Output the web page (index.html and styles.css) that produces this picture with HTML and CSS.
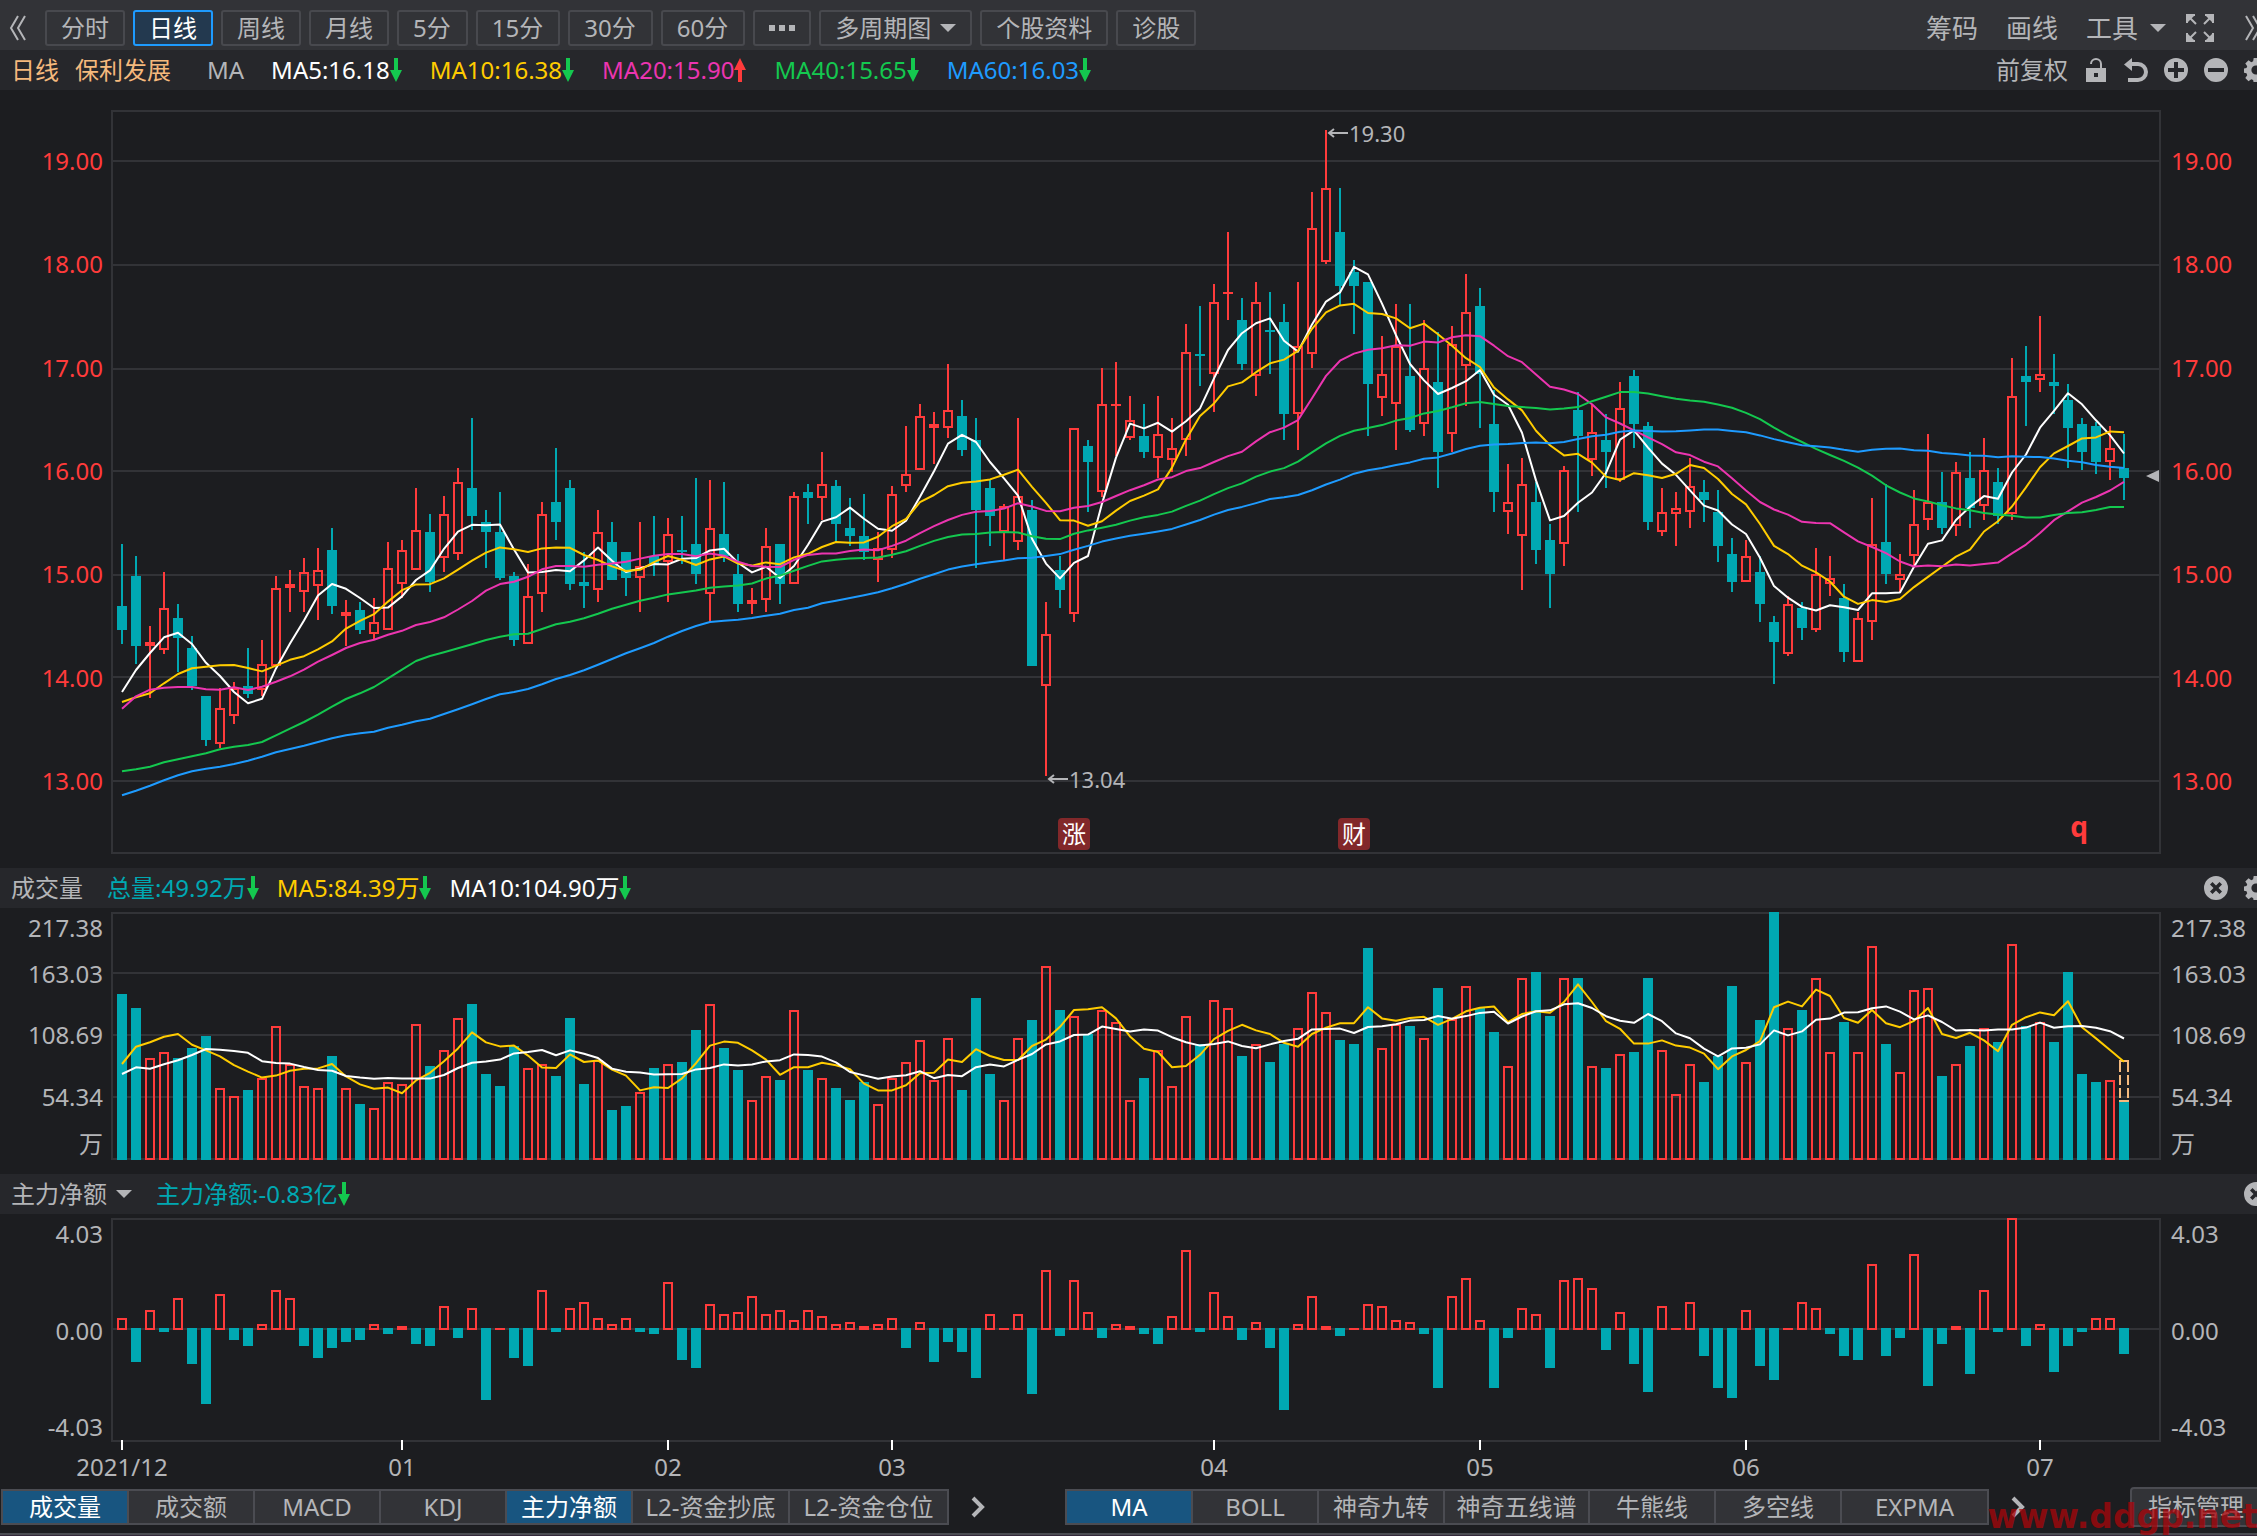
FILE: index.html
```html
<!DOCTYPE html>
<html lang="zh-CN">
<head>
<meta charset="utf-8">
<title>保利发展 日线</title>
<link rel="stylesheet" href="styles.css">
</head>
<body>
<svg class="defs" aria-hidden="true">
  <symbol id="arrow-down" viewBox="0 0 12 24"><path d="M4 0h4v12h4L6 24 0 12h4z"/></symbol>
  <symbol id="arrow-up" viewBox="0 0 12 24"><path d="M4 24h4V12h4L6 0 0 12h4z"/></symbol>
  <symbol id="caret" viewBox="0 0 16 8"><path d="M0 0h16L8 8z"/></symbol>
  <symbol id="gear" viewBox="0 0 26 26"><path fill-rule="evenodd" d="M10.500 0h5l.6 3.600 2 .9 3-2.100 3.500 3.500-2.100 3 .8 2 2.700.4v4.700l-2.700.6-.8 2 2.100 3-3.500 3.500-3-2.100-2 .8-.6 3.200h-5l-.6-3.200-2-.8-3 2.100-3.500-3.500 2.100-3-.8-2L0 16v-4.700l2.700-.4.8-2-2.100-3 3.500-3.500 3 2.100 2-.9zM13 8a5 5 0 1 0 0 10 5 5 0 0 0 0-10z"/></symbol>
  <symbol id="close" viewBox="0 0 24 24"><path fill-rule="evenodd" d="M12 0a12 12 0 1 0 0 24 12 12 0 0 0 0-24zM8.500 6 12 9.500 15.500 6 18 8.500 14.500 12l3.500 3.500-2.500 2.500-3.500-3.500L8.500 18 6 15.500 9.500 12 6 8.500z"/></symbol>
  <symbol id="next" viewBox="0 0 14 22"><path d="M2 2l9 9-9 9" fill="none" stroke="currentColor" stroke-width="4"/></symbol>
</svg>

<header class="toolbar">
  <button class="icon-btn back" aria-label="收起"><svg width="18" height="28" viewBox="0 0 18 28"><path d="M9 2 2 14l7 12M16 2 9 14l7 12" fill="none" stroke="currentColor" stroke-width="2"/></svg></button>
  <nav class="periods">
    <button>分时</button>
    <button class="on">日线</button>
    <button>周线</button>
    <button>月线</button>
    <button class="num">5分</button>
    <button class="num">15分</button>
    <button class="num">30分</button>
    <button class="num">60分</button>
    <button class="more" aria-label="更多"><svg width="26" height="6" viewBox="0 0 26 6"><path d="M0 0h6v6H0zM10 0h6v6h-6zM20 0h6v6h-6z"/></svg></button>
    <button>多周期图<svg class="caret"><use href="#caret"/></svg></button>
    <button>个股资料</button>
    <button>诊股</button>
  </nav>
  <div class="tools">
    <button>筹码</button>
    <button>画线</button>
    <button class="menu">工具<svg class="caret"><use href="#caret"/></svg></button>
    <button class="full" aria-label="全屏"><svg width="28" height="28" viewBox="0 0 28 28" fill="none" stroke="currentColor" stroke-width="2"><path d="M1 9V1h8M19 1h8v8M27 19v8h-8M9 27H1v-8M2 2l8 8M26 2l-8 8M26 26l-8-8M2 26l8-8"/></svg></button>
    <button aria-label="展开"><svg width="24" height="28" viewBox="0 0 24 28"><path d="M4 2l7 12-7 12M11 2l7 12-7 12" fill="none" stroke="currentColor" stroke-width="2"/></svg></button>
  </div>
</header>

<section class="info price-info">
  <span class="stock">日线</span><span class="stock name">保利发展</span><span class="label">MA</span>
  <span class="val white">MA5:16.18<svg class="dn"><use href="#arrow-down"/></svg></span>
  <span class="val yellow">MA10:16.38<svg class="dn"><use href="#arrow-down"/></svg></span>
  <span class="val pink">MA20:15.90<svg class="up"><use href="#arrow-up"/></svg></span>
  <span class="val green">MA40:15.65<svg class="dn"><use href="#arrow-down"/></svg></span>
  <span class="val blue">MA60:16.03<svg class="dn"><use href="#arrow-down"/></svg></span>
  <div class="actions">
    <button>前复权</button>
    <button aria-label="锁定"><svg class="ic" viewBox="0 0 24 24"><path fill-rule="evenodd" d="M2 10h20v14H2zM10 15v4h4v-4z"/><path d="M7 6a5 5 0 0 1 10 0v5" fill="none" stroke="currentColor" stroke-width="2"/></svg></button>
    <button aria-label="撤销"><svg class="ic" viewBox="0 0 24 24"><path d="M0 6.500 8 0v13z"/><path d="M6 6h8a8 8 0 0 1 0 16H4" fill="none" stroke="currentColor" stroke-width="4"/></svg></button>
    <button aria-label="放大"><svg class="ic" viewBox="0 0 24 24"><path fill-rule="evenodd" d="M12 0a12 12 0 1 0 0 24 12 12 0 0 0 0-24zM10 4h4v6h6v4h-6v6h-4v-6H4v-4h6z"/></svg></button>
    <button aria-label="缩小"><svg class="ic" viewBox="0 0 24 24"><path fill-rule="evenodd" d="M12 0a12 12 0 1 0 0 24 12 12 0 0 0 0-24zM4 10h16v4H4z"/></svg></button>
    <button aria-label="设置"><svg class="ic"><use href="#gear"/></svg></button>
  </div>
</section>

<main>
  <section class="panel price">
    <div class="axis left"><span>19.00</span><span>18.00</span><span>17.00</span><span>16.00</span><span>15.00</span><span>14.00</span><span>13.00</span></div>
    <svg class="plot" id="price"></svg>
    <div class="axis right"><span>19.00</span><span>18.00</span><span>17.00</span><span>16.00</span><span>15.00</span><span>14.00</span><span>13.00</span></div>
  </section>

  <section class="info volume-info">
    <span class="label">成交量</span>
    <span class="val teal">总量:49.92万<svg class="dn"><use href="#arrow-down"/></svg></span>
    <span class="val yellow">MA5:84.39万<svg class="dn"><use href="#arrow-down"/></svg></span>
    <span class="val white">MA10:104.90万<svg class="dn"><use href="#arrow-down"/></svg></span>
    <div class="actions">
      <button aria-label="关闭"><svg class="ic"><use href="#close"/></svg></button>
      <button aria-label="设置"><svg class="ic"><use href="#gear"/></svg></button>
    </div>
  </section>
  <section class="panel volume">
    <div class="axis left"><span>217.38</span><span>163.03</span><span>108.69</span><span>54.34</span><span>万</span></div>
    <svg class="plot" id="volume"></svg>
    <div class="axis right"><span>217.38</span><span>163.03</span><span>108.69</span><span>54.34</span><span>万</span></div>
  </section>

  <section class="info flow-info">
    <button class="label">主力净额<svg class="caret"><use href="#caret"/></svg></button>
    <span class="val teal">主力净额:-0.83亿<svg class="dn"><use href="#arrow-down"/></svg></span>
    <div class="actions">
      <button aria-label="关闭"><svg class="ic"><use href="#close"/></svg></button>
    </div>
  </section>
  <section class="panel flow">
    <div class="axis left"><span>4.03</span><span>0.00</span><span>-4.03</span></div>
    <svg class="plot" id="flow"></svg>
    <div class="axis right"><span>4.03</span><span>0.00</span><span>-4.03</span></div>
  </section>
</main>

<footer class="bottom">
  <nav class="tabs">
    <button class="on">成交量</button><button>成交额</button><button>MACD</button><button>KDJ</button><button class="on">主力净额</button><button class="wide">L2-资金抄底</button><button class="wide">L2-资金仓位</button>
  </nav>
  <button class="next" aria-label="更多指标"><svg width="14" height="22"><use href="#next"/></svg></button>
  <nav class="tabs main-tabs">
    <button class="on">MA</button><button>BOLL</button><button>神奇九转</button><button class="mid">神奇五线谱</button><button>牛熊线</button><button>多空线</button><button class="mid">EXPMA</button>
  </nav>
  <button class="next" aria-label="更多主图指标"><svg width="14" height="22"><use href="#next"/></svg></button>
  <button class="manage">指标管理</button>
  <span class="mark">www.ddgp.net</span>
</footer>
<div class="edge"></div>
<script src="chart.js"></script>
</body>
</html>
```
FILE: styles.css
```css
* { box-sizing: border-box; }

body {
  margin: 0;
  background: #1c1d20;
  color: #b4b5b8;
  font-family: "Noto Sans", "Noto Sans CJK SC", sans-serif;
  font-size: 24px;
  line-height: 32px;
  overflow: hidden;
}

button {
  margin: 0;
  padding: 0;
  border: 0;
  background: none;
  color: inherit;
  font: inherit;
  white-space: nowrap;
}

svg { display: block; fill: currentColor; flex: none; }
.defs { position: absolute; width: 0; height: 0; }
.caret { width: 16px; height: 8px; }
.ic { width: 24px; height: 24px; }

.toolbar {
  display: flex;
  align-items: center;
  height: 50px;
  padding: 6px 0 0 9px;
  background: #323337;
}
.toolbar .back { width: 36px; }
.periods { display: flex; gap: 8px; }
.periods button {
  display: flex;
  align-items: center;
  gap: 9px;
  height: 36px;
  padding: 0 14px;
  border: 2px solid #48494e;
  border-radius: 3px;
}
.periods .num { padding-right: 15px; }
.periods .on { background: #23394f; border-color: #1e9bff; color: #fff; }
.tools {
  display: flex;
  align-items: center;
  gap: 28px;
  margin: 0 -9px 0 auto;
  font-size: 26px;
}
.menu { display: flex; align-items: center; gap: 12px; }
.full { margin-left: -8px; }

.info {
  display: flex;
  align-items: center;
  height: 40px;
  padding-left: 11px;
  background: #26272b;
}
.stock { color: #f5b97d; margin-right: 16px; }
.stock.name { margin-right: 36px; }
.info .label { display: flex; align-items: center; gap: 9px; margin-right: 24px; }
.price-info .label { margin-right: 27px; }
.val { display: flex; align-items: center; margin-right: 28px; white-space: nowrap; }
.val svg { width: 12px; height: 24px; }
.volume-info .val { margin-right: 18px; }
.dn { color: #14c84f; }
.up { color: #ff3b3b; }
.white { color: #fff; }
.yellow { color: #ffcc00; }
.pink { color: #ec35b0; }
.green { color: #14c84f; }
.blue { color: #1e9bff; }
.teal { color: #00a8b2; }
.actions { display: flex; align-items: center; gap: 16px; margin: 0 -11px 0 auto; }

.panel { display: flex; align-items: flex-start; }
.plot { flex: 1; min-width: 0; overflow: visible; }
.axis { display: flex; flex-direction: column; justify-content: space-between; }
.axis.left { width: 111px; padding-right: 8px; text-align: right; }
.axis.right { width: 96px; padding-left: 10px; }

.price { padding: 20px 0 14px; }
.price .plot { height: 744px; }
.price .axis { height: 687px; padding-top: 35px; color: #ff3b3b; }
.volume { padding: 4px 0 14px; }
.volume .plot { height: 248px; }
.volume .axis {
  display: grid;
  grid-template: 32px 60px 62px 62px 32px / 1fr;
  align-items: center;
  height: 248px;
}
.flow { padding-top: 4px; }
.flow .plot { height: 269px; }
.flow .axis { height: 225px; }

.plot text { fill: #b4b5b8; }
.plot .note { font-size: 22px; }
.plot .badge { fill: #fff; font-size: 24px; text-anchor: middle; }
.plot .event { fill: #ff3b3b; font-size: 28px; font-weight: 700; text-anchor: middle; }
.plot .date { text-anchor: middle; }

.bottom {
  position: relative;
  display: flex;
  align-items: center;
  height: 40px;
  padding-left: 1px;
}
.tabs { display: flex; border: 2px solid #4b4c52; }
.tabs button {
  width: 126px;
  height: 32px;
  background: #323337;
  border-right: 2px solid #4b4c52;
}
.tabs button:last-child { border-right: 0; }
.tabs .wide { width: 157px; }
.tabs .mid { width: 145px; }
.tabs .on { background: #185580; color: #fff; }
.next { margin-left: 22px; }
.main-tabs { margin-left: 80px; }
.manage {
  height: 40px;
  margin: 0 -10px 0 auto;
  padding: 0 21px 0 16px;
  background: #323337;
  border: 2px solid #4b4c52;
  border-radius: 4px;
}
.mark {
  position: absolute;
  right: -1px;
  bottom: -10px;
  color: rgba(170, 5, 10, .75);
  font: bold 33px/40px "DejaVu Sans", sans-serif;
}
.edge { height: 9px; margin-top: 6px; border-top: 2px solid #4b4c52; background: #33283a; }
```
FILE: chart.js
```js
// Each series is a list of segments: [base, unit, samples]; a sample sits at base + value / unit
// below the top of its plot. T marks a falling day, R a rising one.
const CANDLES = [
  [270, 3, `T492,678,750,792 T528,588,798,852 R738,786,798,954 R576,684,810,822 T672,714,774,876 T768,804,918,930
  T948,948,1080,1098 R924,984,1092,1104 R906,924,1008,1032 T804,918,942,954 R780,852,930,948 R588,624,858,858
  R570,612,624,696 R534,576,636,696 R504,570,618,720 T444,510,678,702 R660,696,708,798 T666,690,750,762
  R654,726,762,780 R486,564,750,750 R480,510,612,654 R324,450,570,570 T402,456,606,636 R348,402,534,576
  R264,306,522,540 T114,324,408,450 T390,426,456,564 T336,456,594,600 T576,588,780,798 R552,648,792,792
  R366,402,642,696 T204,366,426,480 T300,324,612,630 T516,606,618,684 R390,456,630,666`],
  [230, 3, `T546,606,720,720 T636,636,714,768 R546,678,714,816 T528,648,672,708 R534,582,666,786 T528,630,636,672
  T414,612,702,732 R420,564,762,846 T426,582,648,666 T642,702,792,816 R744,780,792,822 R564,618,780,816
  T612,612,732,792 R456,468,732,732 T432,456,474,552 R336,432,474,540 T420,438,552,606 T474,564,588,618
  T462,588,636,660 R576,624,660,726 R438,462,630,654 R258,402,438,456 R192,228,390,390 R216,252,264,372
  R72,210,264,294 T180,228,330,348 T234,300,510,684 T420,444,528,618 R492,498,576,660 R234,468,606,630
  T480,510,978,978 R786,882,1038,1308 T648,690,750,804 R264,264,822,846`],
  [-10, 3, `T1020,1038,1086,1236 R804,912,1176,1190 R786,912,918,1068 R888,960,1014,1020 T912,1008,1056,1074
  R888,1002,1074,1134 R954,1044,1080,1116 R672,756,1020,1068 T618,762,768,858 R552,606,822,936 R396,576,582,660
  T594,660,792,810 R546,606,828,888 T576,690,696,822 T612,666,942,1020 R546,738,942,1050 R276,384,762,804
  R90,264,486,492 T264,396,558,616 T480,516,558,702 T546,546,852,1008 R708,822,894,948 R612,738,912,1050
  T612,828,990,996 R660,804,972,1008 T696,846,1056,1164 R678,732,1002,1056 R522,636,798,918 T564,618,822,984
  T870,972,1176,1236 R1092,1206,1236,1302 R1074,1152,1308,1470 T1146,1206,1350,1392 T1272,1320,1422,1524
  R1098,1110,1332,1398`],
  [130, 2.529, `T384,430,496,688 R416,486,556,598 T440,506,536,627 R359,425,608,611 T329,344,465,526 T460,470,713,733
  R627,688,738,749 R637,678,693,774 R551,622,688,728 T607,637,658,713 T632,688,774,814 T754,794,865,890
  R759,799,865,865 T799,840,921,966 T951,966,1017,1123 R900,921,1047,1052 T916,931,981,1012 R779,845,986,991
  R799,855,870,900 T870,905,1042,1067 R941,956,1067,1067 R652,769,966,1012 T617,764,845,870 R794,845,860,890
  R632,718,799,825 R491,663,708,733 T587,663,728,744 R561,587,723,749 T536,602,678,728 R501,582,673,708
  T577,612,698,718 R298,395,693,708 T268,344,359,470 R192,339,354,384 T288,359,369,440 T364,405,475,577
  T450,465,536,582 T460,470,561,592 R470,526,561,607 T491,577,602,658`]
];

// Averages for the first days, whose history lies before the visible range.
const HISTORY = {
  5: [936,870,819,772],
  10: [966,952,940,910,882,865,860,856,855],
  20: [986,949,929,923,921,921,928,929,922,930,920,905,889,869,845,825,804,789,779],
  40: [1174,1168,1160,1147,1138,1129,1120,1108,1100,1095,1086,1066,1046,1026,1004,980,957,940,921,895,869,843,828,817,
    805,793,780,770,763,761,747,733,725,715,701,686,674,662,653],
  60: [1246,1232,1217,1201,1186,1174,1166,1160,1152,1142,1130,1117,1107,1097,1086,1075,1066,1060,1055,1043,1034,1024,
    1016,1002,988,973,957,943,936,927,913,897,885,871,854,837,820,805,789,770,753,738,726,722,719,714,707,701,690,683,
    670,662,654,646,637,625,611,596,583]
};

const VOLUME = [
  [-52, 3, `402 444 594 576 594 564 528 684 708 690 654 498 612 678 684 588 684 732 744 666 672 492 618 570 474 432 642
  678 558 624 612 648 474 672 600 750 738 696 624 612 606 510 432 564 630`],
  [-22, 3, `630 558 570 360 540 564 594 630 576 642 564 516 450 570 444 600 324 552 630 444 390 228 360 378 432 360 396
  630 564 480 588 378 462 330 354 498 462 516 462 414 306 366 450 462 174 474 402 408 444 294 386 288`],
  [-52, 3, `444 516 618 354 336 468 354 354 618 624 582 576 354 570 702 612 666 588 378 606 480 156 504 450 354 576 486
  576 258 552 636 390 384 648 612 558 504 546 252 498 486 546 336 642 666 660 722`]
];
const VOLUME_HISTORY = { 5: [612,560,547,530], 10: [642,622,626,613,601,585,567,569,573] };

const FLOW = [[-38, 3, `414 546 390 456 354 552 672 342 480 498 432 330 354 498 534 504 486 480 432 462 438 492 498 378
  474 384 660 444 534 558 330 456 384 366 414 432 414 456 462 306 540 564 372 402 396 348 402 390 420 390 408 432 426
  438 432 414 504 426 546 486 516 594 402 444 402 642 270 468 300 396 474 432 438 462 492 408 210 456 336 408 480 426
  504 690 432 348 438 468 444 372 378 420 426 462 624 348 294 420 624 474 384 402 564 300 294 324 510 396 552 636 378
  444 366 528 624 654 390 558 600 444 366 384 462 528 540 252 528 474 222 618 492 438 582 330 456 114 498 432 576 498
  456 414 414 522`]];

const DATES = [[0, '2021/12'], [20, '01'], [39, '02'], [55, '03'], [78, '04'], [97, '05'], [116, '06'], [137, '07']];

const RED = '#ff3b3b', TEAL = '#00a8b2', GRID = '#323337';

const candles = CANDLES.flatMap(([base, unit, text]) => text.trim().split(/\s+/).map(s => ({
  up: s[0] === 'R',
  y: s.slice(1).split(',').map(v => base + v / unit)
})));
const scalars = list => list.flatMap(([base, unit, text]) => text.trim().split(/\s+/).map(v => base + v / unit));
const volume = scalars(VOLUME);
const flow = scalars(FLOW);

const average = (values, n, head) => values.map((_, i) =>
  i < n - 1 ? head[i] : values.slice(i - n + 1, i + 1).reduce((a, b) => a + b, 0) / n);

const rect = (x, y, w, h, fill) => `<rect x="${x}" y="${y}" width="${w}" height="${h}" fill="${fill}"/>`;
const hollow = (x, y, w, h, color) => h <= 4 ? rect(x, y, w, h, color)
  : `<rect x="${x + 1}" y="${y + 1}" width="${w - 2}" height="${h - 2}" fill="none" stroke="${color}" stroke-width="2"/>`;
const line = (values, x, color) =>
  `<polyline points="${values.map((v, i) => `${x(i)},${v.toFixed(1)}`).join(' ')}" fill="none" stroke="${color}" stroke-width="2" stroke-linejoin="round"/>`;
const frame = (w, h, rows) => hollow(0, 0, w, h, GRID) + rows.map(y => rect(2, y, w - 4, 2, GRID)).join('');
const crisp = s => `<g shape-rendering="crispEdges">${s}</g>`;
const arrow = (x, y) => `<path d="M${x + 20} ${y}H${x + 1}M${x + 6} ${y - 4}l-5 4 5 4" fill="none" stroke="#b4b5b8" stroke-width="2"/>`;

function draw() {
  const price = document.getElementById('price');
  const w = Math.round(price.getBoundingClientRect().width);
  const step = w / 2050 * 14;
  const x = i => Math.round(step * (i + 11 / 14));

  let s = frame(w, 744, [50, 154, 258, 360, 464, 566, 670]);
  candles.forEach(({ up, y }, i) => {
    const [high, top, bottom, low] = y.map(Math.round);
    const color = up ? RED : TEAL, c = x(i);
    s += rect(c - 1, high, 2, top - high, color) + rect(c - 1, bottom, 2, Math.max(0, low - bottom), color);
    s += up ? hollow(c - 5, top, 10, bottom - top, color) : rect(c - 5, top, 10, bottom - top, color);
  });
  s = crisp(s);
  const closes = candles.map(c => c.up ? c.y[1] : c.y[2]);
  [[5, '#ffffff'], [10, '#ffcc00'], [20, '#ec35b0'], [40, '#14c84f'], [60, '#1e9bff']].forEach(([n, color]) => {
    s += line(average(closes, n, HISTORY[n].map(v => 270 + v / 3)), x, color);
  });
  s += arrow(x(86) + 2, 23) + `<text class="note" x="${x(86) + 23}" y="32">19.30</text>`;
  s += arrow(x(66) + 2, 669) + `<text class="note" x="${x(66) + 23}" y="678">13.04</text>`;
  [[68, '涨'], [88, '财']].forEach(([i, t]) => {
    s += `<rect x="${x(i) - 16}" y="708" width="32" height="32" rx="4" fill="#82282a"/><text class="badge" x="${x(i)}" y="733">${t}</text>`;
  });
  s += `<text class="event" x="${x(140) - 3}" y="727">q</text>`;
  s += `<path d="M${w - 15} 366l13-6v12z" fill="#b4b5b8"/>`;
  price.innerHTML = s;

  let v = frame(w, 248, [60, 122, 184]);
  volume.forEach((y, i) => {
    const top = Math.round(y);
    v += candles[i].up ? hollow(x(i) - 5, top, 10, 248 - top, RED) : rect(x(i) - 5, top, 10, 248 - top, TEAL);
  });
  const last = x(143);
  v += rect(last - 5, 148, 10, 2, '#f5b97d') + rect(last - 5, 188, 10, 2, '#f5b97d');
  v += `<path d="M${last - 4} 150v38M${last + 4} 150v38" stroke="#f5b97d" stroke-width="2" stroke-dasharray="10 3"/>`;
  v = crisp(v);
  v += line(average(volume, 5, VOLUME_HISTORY[5].map(n => -52 + n / 3)), x, '#ffcc00');
  v += line(average(volume, 10, VOLUME_HISTORY[10].map(n => -52 + n / 3)), x, '#ffffff');
  document.getElementById('volume').innerHTML = v;

  let f = frame(w, 224, [110]);
  flow.forEach((y, i) => {
    const at = Math.round(y);
    f += at <= 110 ? hollow(x(i) - 5, at, 10, 112 - at, RED) : rect(x(i) - 5, 110, 10, at - 110, TEAL);
  });
  DATES.forEach(([i]) => { f += rect(x(i) - 1, 222, 2, 10, '#fff'); });
  f = crisp(f);
  DATES.forEach(([i, t]) => { f += `<text class="date" x="${x(i)}" y="258">${t}</text>`; });
  document.getElementById('flow').innerHTML = f;
}

draw();
window.addEventListener('resize', draw);
```
